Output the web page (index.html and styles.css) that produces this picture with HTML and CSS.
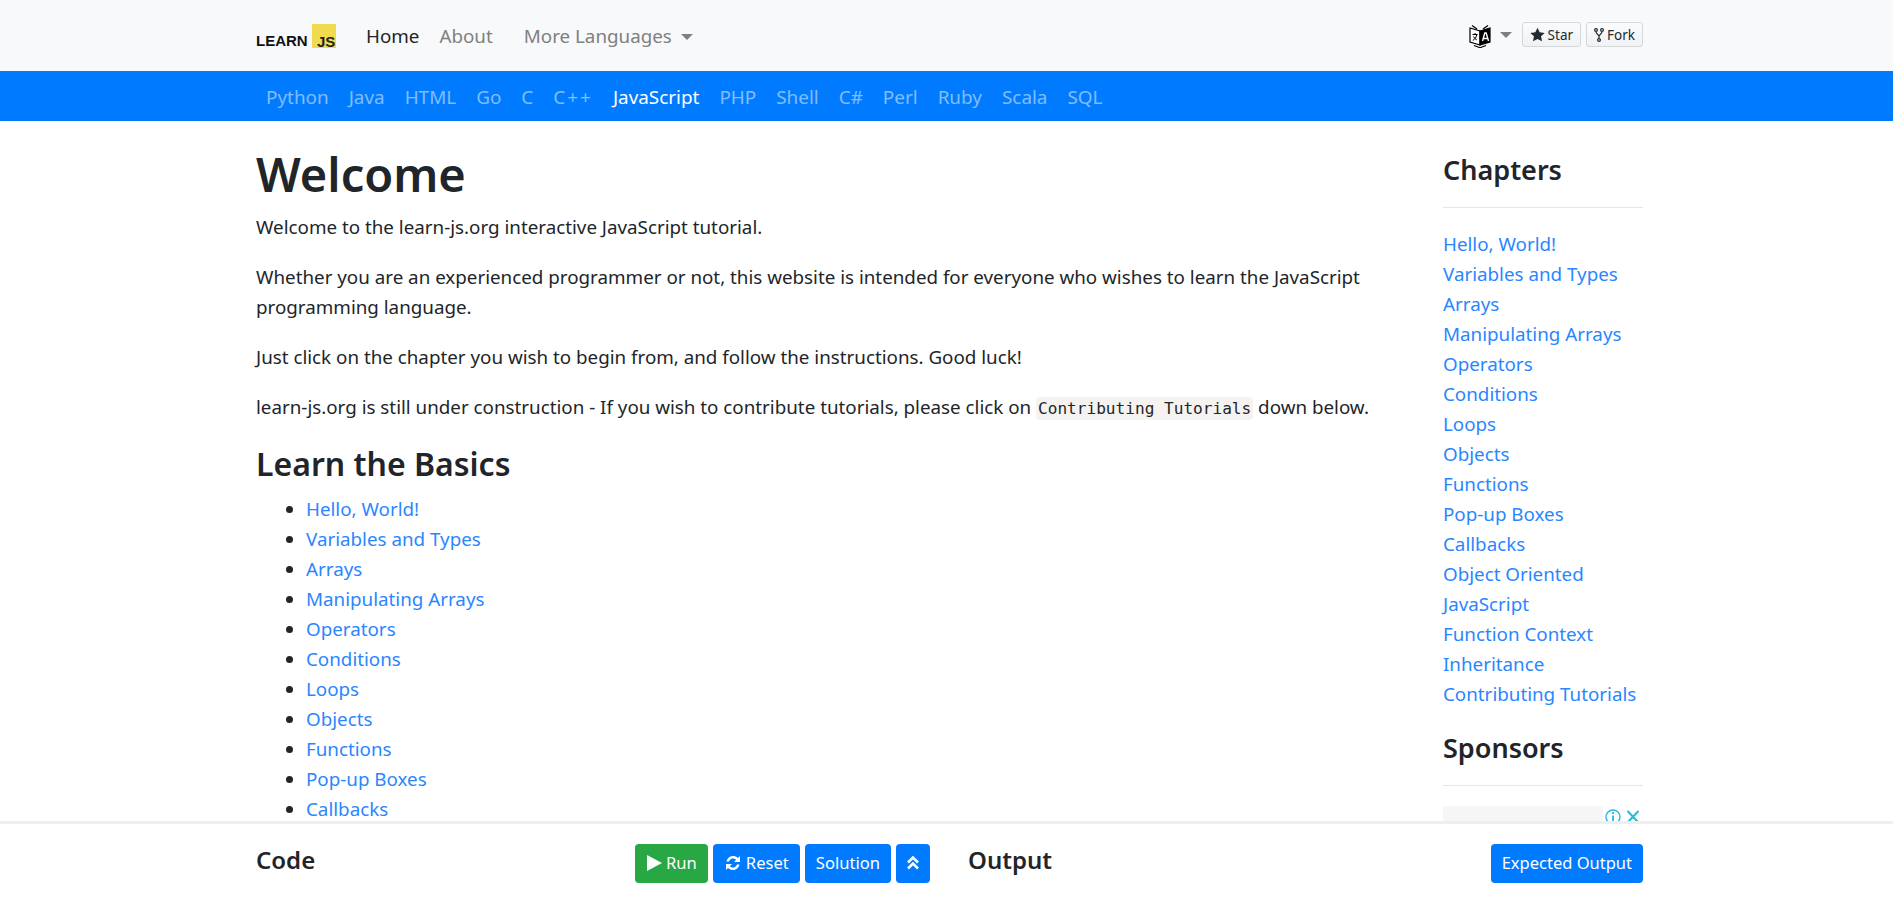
FILE: index.html
```html
<!DOCTYPE html>
<html lang="en">
<head>
<meta charset="utf-8">
<title>Learn JavaScript - Free Interactive JavaScript Tutorial</title>
<link rel="stylesheet" href="styles.css">
</head>
<body>
<header class="topbar">
  <div class="wrap topbar-in">
    <a class="logo" href="#"><span class="logo-learn">LEARN</span><span class="logo-js">JS</span></a>
    <nav class="mainnav">
      <a class="active" href="#">Home</a>
      <a href="#">About</a>
      <a class="more" href="#">More Languages<i class="caret"></i></a>
    </nav>
    <div class="tools">
      <svg class="translate" viewBox="0 0 24 24" width="24" height="24"><path d="M2 4l10 3v14L2 18z" fill="#fff" stroke="#000" stroke-width="1.200"/><path d="M12 7l10-3v14l-10 3z" fill="#000" stroke="#000" stroke-width="1.200"/><path d="M4 1.500l5 3.500M20 1.500l-5 3.500" stroke="#000" stroke-width="1.200"/><path d="M4.500 10.500h5M7 9v1.500M8.800 10.500c-.5 2.800-1.800 4.700-4 5.900M5.500 12.500c.7 1.600 1.800 2.700 3.300 3.400" fill="none" stroke="#000" stroke-width="1"/><path d="M14.500 17l2.300-8h1.400l2.300 8M15.500 14.500h4" fill="none" stroke="#fff" stroke-width="1.400"/><path d="M6 21.500l6 2.200 6-2.200" fill="none" stroke="#000" stroke-width="1.200"/></svg>
      <i class="caret"></i>
      <a class="gh" href="#"><svg viewBox="0 0 14 14" width="15" height="15"><path d="M7 .6l2 4.300 4.700.6-3.400 3.200.9 4.700L7 11.100l-4.200 2.300.9-4.700L.3 5.500 5 4.900z" fill="#24292e"/></svg>Star</a>
      <a class="gh" href="#"><svg viewBox="0 0 10 16" width="10" height="16"><circle cx="2" cy="3" r="1.400" fill="none" stroke="#24292e" stroke-width="1.200"/><circle cx="8" cy="3" r="1.400" fill="none" stroke="#24292e" stroke-width="1.200"/><circle cx="5" cy="13" r="1.400" fill="none" stroke="#24292e" stroke-width="1.200"/><path d="M2 4.500c0 3 3 3 3 5v2M8 4.500c0 3-3 3-3 5" fill="none" stroke="#24292e" stroke-width="1.200"/></svg>Fork</a>
    </div>
  </div>
</header>
<nav class="langbar">
  <div class="wrap langbar-in">
    <a href="#">Python</a><a href="#">Java</a><a href="#">HTML</a><a href="#">Go</a><a href="#">C</a><a class="cpp" href="#">C++</a><a class="active" href="#">JavaScript</a><a href="#">PHP</a><a href="#">Shell</a><a href="#">C#</a><a href="#">Perl</a><a href="#">Ruby</a><a href="#">Scala</a><a href="#">SQL</a>
  </div>
</nav>
<main class="wrap content">
  <article class="article">
    <h1>Welcome</h1>
    <p>Welcome to the learn-js.org interactive JavaScript tutorial.</p>
    <p>Whether you are an experienced programmer or not, this website is intended for everyone who wishes to learn the JavaScript programming language.</p>
    <p>Just click on the chapter you wish to begin from, and follow the instructions. Good luck!</p>
    <p>learn-js.org is still under construction - If you wish to contribute tutorials, please click on <code>Contributing Tutorials</code> down below.</p>
    <h2>Learn the Basics</h2>
    <ul>
      <li><a href="#">Hello, World!</a></li>
      <li><a href="#">Variables and Types</a></li>
      <li><a href="#">Arrays</a></li>
      <li><a href="#">Manipulating Arrays</a></li>
      <li><a href="#">Operators</a></li>
      <li><a href="#">Conditions</a></li>
      <li><a href="#">Loops</a></li>
      <li><a href="#">Objects</a></li>
      <li><a href="#">Functions</a></li>
      <li><a href="#">Pop-up Boxes</a></li>
      <li><a href="#">Callbacks</a></li>
    </ul>
  </article>
  <aside class="sidebar">
    <h3>Chapters</h3>
    <hr>
    <div class="chapters">
      <a href="#">Hello, World!</a>
      <a href="#">Variables and Types</a>
      <a href="#">Arrays</a>
      <a href="#">Manipulating Arrays</a>
      <a href="#">Operators</a>
      <a href="#">Conditions</a>
      <a href="#">Loops</a>
      <a href="#">Objects</a>
      <a href="#">Functions</a>
      <a href="#">Pop-up Boxes</a>
      <a href="#">Callbacks</a>
      <a href="#">Object Oriented JavaScript</a>
      <a href="#">Function Context</a>
      <a href="#">Inheritance</a>
      <a href="#">Contributing Tutorials</a>
    </div>
    <h3 class="sponsors">Sponsors</h3>
    <hr>
    <div class="ad">
      <svg class="ad-icons" viewBox="0 0 40 20" width="40" height="20"><circle cx="10" cy="11" r="7" fill="none" stroke="#2bb8d6" stroke-width="1.400"/><path d="M10 9.500v6M10 6v2" stroke="#2bb8d6" stroke-width="1.800"/><path d="M24.500 5l11 11.500M35.500 5l-11 11.500" stroke="#2bb8d6" stroke-width="2"/></svg>
    </div>
  </aside>
</main>
<footer class="dock">
  <div class="wrap dock-in">
    <h4 class="dock-code">Code</h4>
    <div class="actions">
      <a class="btn green" href="#"><svg viewBox="0 0 16 18" width="16" height="20"><path d="M1 1l15 8-15 8z" fill="#fff"/></svg>Run</a>
      <a class="btn" href="#"><svg viewBox="0 0 18 18" width="18" height="18"><path d="M2.500 7.500A6.800 6.800 0 0 1 14 4l2-2v6h-6l2.200-2.200A4.300 4.300 0 0 0 5 7.500zM15.500 10.500A6.800 6.800 0 0 1 4 14l-2 2v-6h6l-2.200 2.200A4.300 4.300 0 0 0 13 10.500z" fill="#fff"/></svg>Reset</a>
      <a class="btn" href="#">Solution</a>
      <a class="btn icon" href="#"><svg viewBox="0 0 14 16" width="14" height="16"><path d="M2 7.500l5-5 5 5M2 13.500l5-5 5 5" fill="none" stroke="#fff" stroke-width="2.600"/></svg></a>
    </div>
    <h4 class="dock-output">Output</h4>
    <a class="btn expected" href="#">Expected Output</a>
  </div>
</footer>
</body>
</html>
```
FILE: styles.css
```css
* { box-sizing: border-box; }
html, body { margin: 0; height: 100%; }
body {
  display: flex;
  flex-direction: column;
  height: 902px;
  overflow: hidden;
  font-family: "Noto Sans", "Open Sans", sans-serif;
  font-size: 18.800px;
  line-height: 30px;
  color: #212529;
  background: #fff;
}
a { text-decoration: none; color: #2a86ff; }
.wrap { width: 1387px; margin-left: 256px; }

.topbar { height: 71px; background: #f8f9fa; flex: none; }
.topbar-in { display: flex; align-items: center; height: 71px; }
.logo { display: flex; align-items: flex-end; width: 81px; height: 24px; margin-top: 1px; }
.logo-learn { font: bold 15px/14px "Liberation Sans", sans-serif; color: #111; width: 56px; }
.logo-js { width: 24px; height: 24px; background: #f0db4f; color: #222; font: bold 15px/13px "Liberation Sans", sans-serif; padding: 11px 0 0 5px; }
.mainnav { display: flex; margin-left: 29px; }
.mainnav a { color: #80807f; margin-right: 20px; }
.mainnav a.active { color: #212529; }
.mainnav a.more { margin-left: 11px; }
.caret { display: inline-block; width: 0; height: 0; border-top: 6px solid #80807f; border-left: 6px solid transparent; border-right: 6px solid transparent; }
.more .caret { margin-left: 9px; vertical-align: 3px; }
.tools { display: flex; align-items: center; margin-left: auto; margin-top: -2px; }
.translate { margin: 3px 8px 0 0; }
.tools > .caret { margin-right: 5px; }
.gh { display: flex; align-items: center; gap: 3px; height: 25px; padding: 0 7px 0 7px; font: 13.500px/22px "Noto Sans", sans-serif; color: #24292e; background: linear-gradient(#fafbfc, #eff3f6); border: 1px solid #d5d7d9; border-radius: 3px; margin-left: 5px; }

.langbar { height: 50px; background: #007bff; flex: none; }
.langbar-in { display: flex; align-items: center; height: 50px; padding-top: 1px; }
.langbar a { color: rgba(255,255,255,.5); padding: 0 10px; font-size: 18.900px; }
.langbar a.active { color: #fff; }
.langbar a.cpp { letter-spacing: 2px; }

.content { display: flex; flex: 1; justify-content: space-between; min-height: 0; }
.article { width: 1130px; }
h1 { font-size: 47px; line-height: 60px; font-weight: 600; margin: 23px 0 8px; }
h2 { font-size: 32px; line-height: 40px; font-weight: 600; margin: 22px 0 10px; }
h3 { font-size: 27px; line-height: 34px; font-weight: 600; margin: 0; }
p { margin: 0 0 20px; }
code { font: 16.100px/18px "DejaVu Sans Mono", "Liberation Mono", monospace; color: #212529; background: #f5f2f0; padding: 2px; border-radius: 4px; }
ul { margin: 0; padding-left: 50px; }
.sidebar { width: 200px; padding-top: 32px; }
hr { border: 0; border-top: 1px solid #e6e6e6; margin: 20px 0 20px; }
.chapters { padding-top: 1px; }
.chapters a { display: block; }
.sponsors { margin-top: 22px; }
.ad { height: 40px; background: #f6f6f6; position: relative; }
.ad-icons { position: absolute; right: 0; top: 0; background: #fff; }

.dock { position: fixed; left: 0; right: 0; bottom: 0; height: 81px; background: #fff; border-top: 3px solid #eee; }
.dock-in { display: flex; align-items: center; height: 78px; }
h4 { font-size: 24px; line-height: 30px; font-weight: 600; margin: 0 0 6px; }
.dock-code { width: 379px; }
.actions { display: flex; gap: 5px; }
.dock-output { margin-left: 38px; }
.btn { display: flex; align-items: center; gap: 4px; height: 39px; padding: 0 11px; color: #fff; background: #007bff; border-radius: 4px; font-size: 16.600px; }
.btn.green { background: #28a745; }
.btn.icon { padding: 0 10px; }
.btn.expected { margin-left: auto; font-size: 16.500px; }
```
